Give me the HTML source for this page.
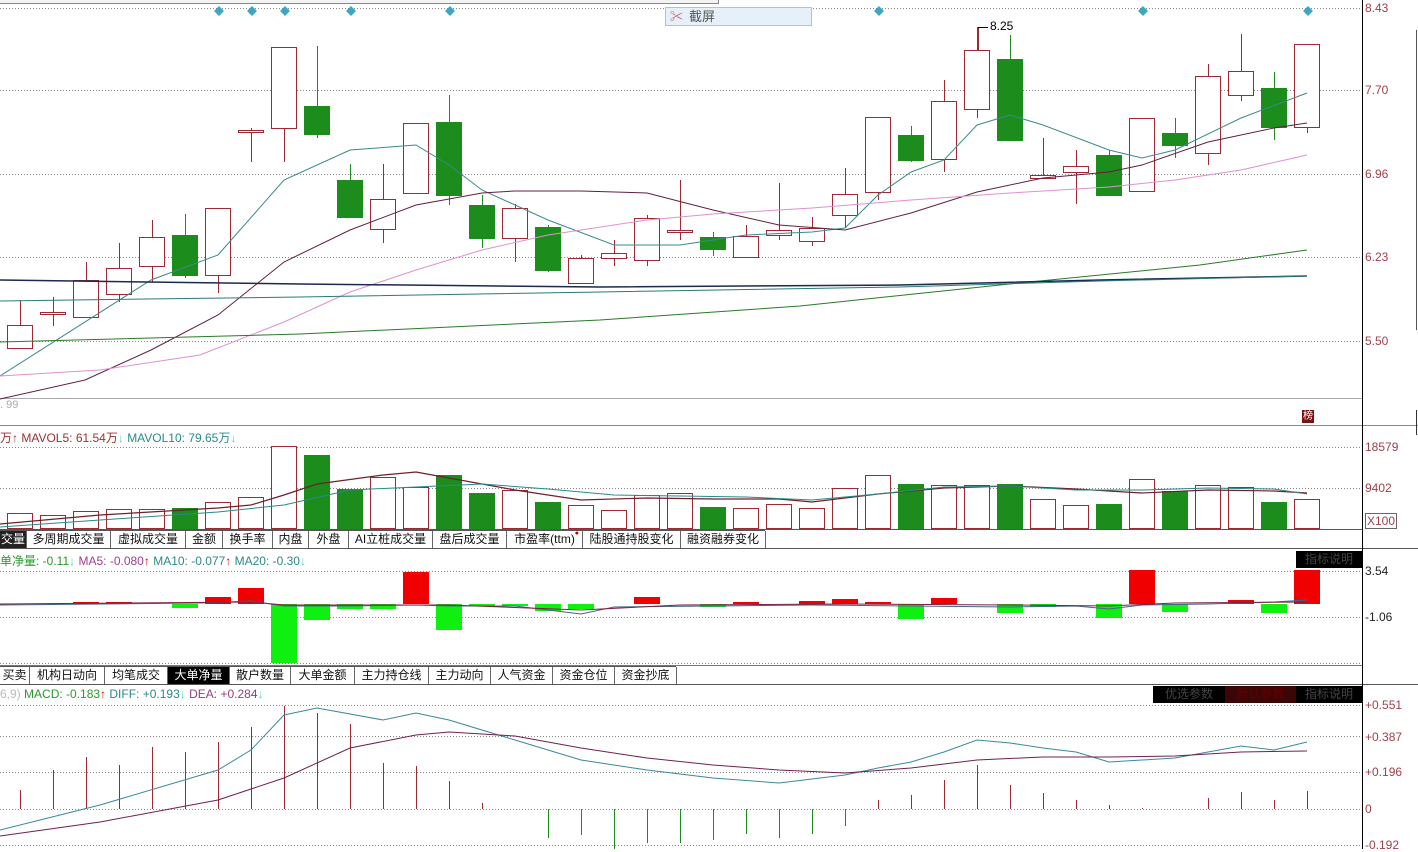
<!DOCTYPE html>
<html><head><meta charset="utf-8"><style>
html,body{margin:0;padding:0;background:#fff;width:1418px;height:849px;overflow:hidden;font-family:"Liberation Sans","Noto Sans CJK SC",sans-serif;}
svg{position:absolute;left:0;top:0}
.tab{position:absolute;font-size:12px;height:17px;line-height:17px;border-right:1px solid #666;text-align:center;color:#111;background:#fff}
.sel{background:#222;color:#fff}
.leg{position:absolute;font-size:12px;white-space:nowrap}
.ax{position:absolute;left:1365px;font-size:12px;color:#a0404a}
.btn{position:absolute;font-size:12px;height:17px;line-height:17px;text-align:center;color:#444;background:#000}
</style></head><body>
<svg id="s" width="1418" height="849" xmlns="http://www.w3.org/2000/svg"></svg>

<div style="position:absolute;left:0;top:0;width:718px;height:3px;border-bottom:1px solid #888;border-right:1px solid #888;background:#f4f4f4"></div>
<div style="position:absolute;left:665px;top:7px;width:145px;height:17px;background:#e6f0fa;border:1px solid #a8c4e0;font-size:13px;color:#555;line-height:17px"><span style="color:#c66;margin:0 6px 0 4px">✂</span>截屏</div>
<div style="position:absolute;left:990px;top:19px;font-size:12px;color:#000">8.25</div>
<div style="position:absolute;left:0;top:399px;font-size:11px;color:#aaa">. 99</div>
<div style="position:absolute;left:1302px;top:410px;width:12px;height:13px;background:#7a1010;color:#fff;font-size:10px;line-height:13px;text-align:center">榜</div>

<div class="ax" style="top:1px">8.43</div>
<div class="ax" style="top:83px">7.70</div>
<div class="ax" style="top:167px">6.96</div>
<div class="ax" style="top:250px">6.23</div>
<div class="ax" style="top:334px">5.50</div>
<div class="ax" style="top:440px">18579</div>
<div class="ax" style="top:481px">9402</div>
<div class="ax" style="top:513px;border:1px solid #666;padding:0 1px;color:#a0404a">X100</div>
<div class="ax" style="top:564px;color:#222">3.54</div>
<div class="ax" style="top:610px;color:#222">-1.06</div>
<div class="ax" style="top:698px">+0.551</div>
<div class="ax" style="top:730px">+0.387</div>
<div class="ax" style="top:765px">+0.196</div>
<div class="ax" style="top:802px">0</div>
<div class="ax" style="top:838px">-0.192</div>

<div class="leg" style="left:0;top:429px;color:#a03030">万<span>↑</span> MAVOL5: 61.54万<span style="color:#5cc">↓</span> <span style="color:#2a8a8a">MAVOL10: 79.65万</span><span style="color:#5cc">↓</span></div>
<div class="leg" style="left:0;top:552px;color:#2a9a2a">单净量: -0.11<span style="color:#5cc">↓</span> <span style="color:#a04090">MA5: -0.080</span><span style="color:#d00">↑</span> <span style="color:#2a8a8a">MA10: -0.077</span><span style="color:#d00">↑</span> <span style="color:#2a8a8a">MA20: -0.30</span><span style="color:#5cc">↓</span></div>
<div class="leg" style="left:0;top:687px;color:#2a9a2a"><span style="color:#bbb">6,9)</span> MACD: -0.183<span style="color:#d00">↑</span> <span style="color:#2a8a8a">DIFF: +0.193</span><span style="color:#5cc">↓</span> <span style="color:#904080">DEA: +0.284</span><span style="color:#5cc">↓</span></div>

<div class="tab sel" style="left:0;top:531px;width:26px">交量</div>
<div class="tab" style="left:27px;top:531px;width:83px">多周期成交量</div>
<div class="tab" style="left:111px;top:531px;width:74px">虚拟成交量</div>
<div class="tab" style="left:186px;top:531px;width:36px">金额</div>
<div class="tab" style="left:223px;top:531px;width:49px">换手率</div>
<div class="tab" style="left:273px;top:531px;width:35px">内盘</div>
<div class="tab" style="left:309px;top:531px;width:39px">外盘</div>
<div class="tab" style="left:349px;top:531px;width:83px">AI立桩成交量</div>
<div class="tab" style="left:433px;top:531px;width:73px">盘后成交量</div>
<div class="tab" style="left:507px;top:531px;width:75px">市盈率(ttm)<span style="position:absolute;right:3px;top:-6px;color:#c00;font-size:7px">●</span></div>
<div class="tab" style="left:583px;top:531px;width:97px">陆股通持股变化</div>
<div class="tab" style="left:681px;top:531px;width:84px">融资融券变化</div>

<div class="tab" style="left:0;top:667px;width:29px">买卖</div>
<div class="tab" style="left:30px;top:667px;width:74px">机构日动向</div>
<div class="tab" style="left:105px;top:667px;width:62px">均笔成交</div>
<div class="tab sel" style="left:168px;top:667px;width:61px;background:#000">大单净量</div>
<div class="tab" style="left:230px;top:667px;width:60px">散户数量</div>
<div class="tab" style="left:291px;top:667px;width:63px">大单金额</div>
<div class="tab" style="left:355px;top:667px;width:73px">主力持仓线</div>
<div class="tab" style="left:429px;top:667px;width:61px">主力动向</div>
<div class="tab" style="left:491px;top:667px;width:61px">人气资金</div>
<div class="tab" style="left:553px;top:667px;width:61px">资金仓位</div>
<div class="tab" style="left:615px;top:667px;width:61px">资金抄底</div>

<div class="btn" style="left:1296px;top:551px;width:66px">指标说明</div>
<div class="btn" style="left:1153px;top:686px;width:72px">优选参数</div>
<div class="btn" style="left:1225px;top:686px;width:71px;background:#3a0606;color:#600">默认参数</div>
<div class="btn" style="left:1296px;top:686px;width:66px">指标说明</div>

<script>
const s=document.getElementById('s');let h='';
const L=(x1,y1,x2,y2,c,w,d)=>h+=`<line x1="${x1}" y1="${y1}" x2="${x2}" y2="${y2}" stroke="${c}" stroke-width="${w||1}" ${d?'stroke-dasharray="1,2"':''}/>`;
[8,90,174,257,341,447,488,571,617,663,705,736,772,809,845].forEach(y=>L(0,y+.5,1362,y+.5,'#888',1,1));
L(0,398.5,1362,398.5,'#aaa');L(0,425.5,1418,425.5,'#888');L(0,529.5,1362,529.5,'#555');L(0,548.5,1418,548.5,'#555');
L(0,665.5,1362,665.5,'#777');L(0,684.5,1418,684.5,'#555');L(1362.5,0,1362.5,849,'#000');L(0,530.5,765,530.5,'#555');L(0,666.5,676,666.5,'#555');
const R='#a02832',G='#1c8c1c';
const C=[[325,348,300,348,0],[312,314,297,326,0],[280,317,262,317,0],[268,294,243,302,0],[237,266,220,282,0],[235,275,214,278,1],[208,275,208,293,0],[130,132,128,162,0],[47,128,47,162,0],[106,134,46,138,1],[180,217,164,217,1],[199,229,164,243,0],[123,193,123,193,0],[122,195,95,205,1],[205,238,195,248,1],[208,238,204,262,0],[227,270,225,272,1],[258,283,255,283,0],[253,258,240,266,0],[218,260,215,266,0],[230,232,180,240,0],[237,249,232,256,1],[236,257,225,258,0],[230,235,183,240,0],[228,241,217,246,0],[194,215,168,228,0],[117,192,117,200,0],[135,160,126,162,1],[101,159,80,172,0],[50,109,27,118,0],[59,140,35,140,1],[175,178,138,178,0],[166,172,150,204,0],[155,195,150,195,1],[118,191,118,191,0],[133,145,118,158,1],[76,153,64,165,0],[71,95,34,101,0],[88,127,72,140,1],[44,127,44,133,0]];
const V=[513,515,511,509,509,508,502,497,446,455,489,477,487,475,493,490,502,505,510,495,493,507,508,504,508,488,475,484,485,485,484,499,505,504,479,491,485,487,502,499];
C.forEach((c,i)=>{const x=20+i*33,col=c[4]?G:R;
L(x+.5,c[2],x+.5,c[0],col);L(x+.5,c[1],x+.5,c[3],col);
h+=`<rect x="${x-12.5}" y="${c[0]+.5}" width="25" height="${Math.max(1,c[1]-c[0])}" fill="${c[4]?G:'#fff'}" stroke="${col}"/>`;
h+=`<rect x="${x-12.5}" y="${V[i]+.5}" width="25" height="${528-V[i]}" fill="${c[4]?G:'#fff'}" stroke="${col}"/>`;});
L(978.5,27,978.5,50,R);L(978,27.5,988,27.5,'#000');
const P=(pts,c,w)=>h+=`<polyline fill="none" stroke="${c}" stroke-width="${w||1}" points="${pts}"/>`;
P('0,376 151,280 218,255 284,180 350,150 416,145 449,165 482,190 548,220 614,245 680,245 746,235 812,232 845,228 878,195 911,172 944,160 977,125 1010,115 1043,125 1109,150 1142,158 1175,150 1241,118 1307,93','#3a8a8a');
P('0,399 85,380 151,350 218,315 284,262 350,230 416,205 482,193 515,191 581,191 647,193 713,210 779,225 845,230 911,213 977,192 1043,178 1109,172 1142,165 1208,142 1274,128 1307,123','#602040');
P('0,376 100,370 200,355 284,322 350,292 416,270 482,250 548,235 647,220 713,214 812,208 911,200 1010,193 1109,187 1175,180 1241,170 1307,155','#e090d0');
P('0,342 300,334 600,320 800,306 1000,285 1200,265 1307,250','#2a7a2a');
P('0,280 300,284 600,287 900,285 1100,280 1307,276','#1a2a50',1.5);
P('0,301 300,297 600,292 900,287 1100,281 1307,276','#2a7a7a');
[219,252,285,351,450,879,1143,1308].forEach(x=>h+=`<rect x="${x-3.5}" y="7.5" width="7" height="7" fill="#3aa8c0" transform="rotate(45 ${x} 11)"/>`);
P('0,524 100,515 218,508 251,505 284,495 317,484 383,475 416,472 449,478 515,490 581,500 647,498 713,499 779,499 812,502 878,494 944,488 1010,486 1076,489 1142,493 1208,490 1274,491 1307,493','#702028',1.2);
P('0,527 100,520 218,512 284,505 350,490 416,487 482,484 548,489 614,495 680,496 746,497 812,500 878,494 944,487 1010,486 1076,490 1142,490 1208,488 1274,489 1307,494','#2a8a8a');
const B={3:-2,4:-2,6:4,7:-7,8:-16,9:59,10:16,11:5,12:5,13:-32,14:26,15:2,16:2,17:7,18:5,20:-7,22:3,23:-2,25:-3,26:-5,27:-2,28:15,29:-6,31:9,32:3,34:14,35:-34,36:8,38:-4,39:9,40:-34};
for(const k in B){const i=k-1,x=20+i*33,v=B[k];h+=`<rect x="${x-13}" y="${v<0?604+v:604}" width="26" height="${Math.abs(v)}" fill="${v<0?'#f00000':'#10f010'}"/>`;}
P('0,605 200,603 251,601 284,606 350,606 416,605 449,606 515,606 581,614 614,607 713,606 812,605 911,606 1010,607 1076,606 1109,609 1142,605 1208,604 1274,602 1307,600','#3a6a8a');
P('0,604 251,602 284,605 449,605 581,610 680,605 845,604 1010,605 1109,606 1175,603 1307,602','#802040');
const M=[790,770,757,765,747,752,742,727,706,713,724,763,766,781,803,809,838,835,849,843,843,840,834,838,834,826,800,795,780,765,785,793,800,805,808,809,798,792,800,791];
M.forEach((y,i)=>{const x=20+i*33+.5;if(y!=809)L(x,809,x,y,y<809?R:G);});
P('0,830 100,805 218,770 251,750 284,715 317,708 383,720 416,713 449,720 515,740 581,760 647,770 713,778 779,783 845,775 878,768 911,762 944,752 977,740 1010,743 1043,748 1076,752 1109,762 1142,760 1175,758 1241,746 1274,750 1307,742','#3a8a9a');
P('0,836 100,822 218,800 284,778 350,748 416,735 449,732 515,736 581,748 647,758 713,765 779,770 845,773 911,768 977,760 1043,757 1109,757 1175,756 1241,752 1307,751','#702050');
L(1416.5,30,1416.5,330,'#555');L(1416.5,410,1416.5,435,'#333');
s.innerHTML=h;
</script>
</body></html>
